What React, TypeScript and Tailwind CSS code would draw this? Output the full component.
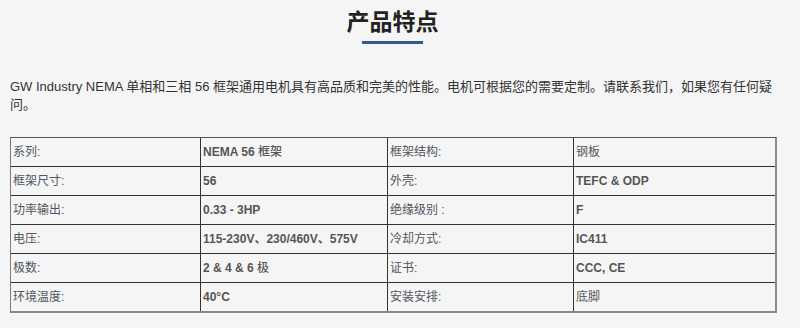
import React from "react";

const rows: [string, React.ReactNode, string, React.ReactNode][] = [
  ["系列:", <span>NEMA 56 <span className="font-medium">框架</span></span>, "框架结构:", <span className="font-normal">钢板</span>],
  ["框架尺寸:", "56", "外壳:", "TEFC & ODP"],
  ["功率输出:", "0.33 - 3HP", "绝缘级别 :", "F"],
  ["电压:", "115-230V、230/460V、575V", "冷却方式:", "IC411"],
  ["极数:", <span>2 &amp; 4 &amp; 6 <span className="font-medium">极</span></span>, "证书:", "CCC, CE"],
  ["环境温度:", "40°C", "安装安排:", <span className="font-normal">底脚</span>],
];

const font = { fontFamily: '"Liberation Sans", Arial, "Noto Sans CJK SC", sans-serif' };

export default function App() {
  return (
    <div className="w-[800px] h-[328px] bg-[#f5f5f5] overflow-hidden" style={font}>
      <div className="w-[785px] px-[10px]">
        <div className="flex flex-col items-center pt-[7px]">
          <h2 className="text-[23px] leading-[30px] font-bold text-[#222]">产品特点</h2>
          <div className="mt-[4px] w-[61px] h-[3px] bg-[#2e5b88]" />
        </div>
        <p className="mt-[34px] w-[766px] text-[13px] leading-[18px] text-[#333]">
          GW Industry NEMA 单相和三相 56 框架通用电机具有高品质和完美的性能。电机可根据您的需要定制。请联系我们，如果您有任何疑问。
        </p>
        <div className="mt-[23px] w-[767px] border-l border-t border-l-[#7a7a7a] border-t-[#555] border-r-2 border-b-2 border-r-[#8a8a8a] border-b-[#8a8a8a]">
          <div className="grid grid-cols-[190px_187px_186px_201px]">
            {rows.map((r, ri) =>
              r.map((c, ci) => {
                const last = ri === rows.length - 1;
                const lastCol = ci === 3;
                const bold = ci === 1 || ci === 3;
                return (
                  <div
                    key={ri + "-" + ci}
                    className={
                      "flex items-center pl-[2px] text-[12px] " +
                      (last ? "h-[28px] " : "h-[29px] border-b border-b-[#333] ") +
                      (lastCol ? "" : "border-r border-r-[#333] ") +
                      (bold ? "font-bold text-[#555]" : "font-normal text-[#505560]")
                    }
                  >
                    {c}
                  </div>
                );
              })
            )}
          </div>
        </div>
      </div>
    </div>
  );
}
